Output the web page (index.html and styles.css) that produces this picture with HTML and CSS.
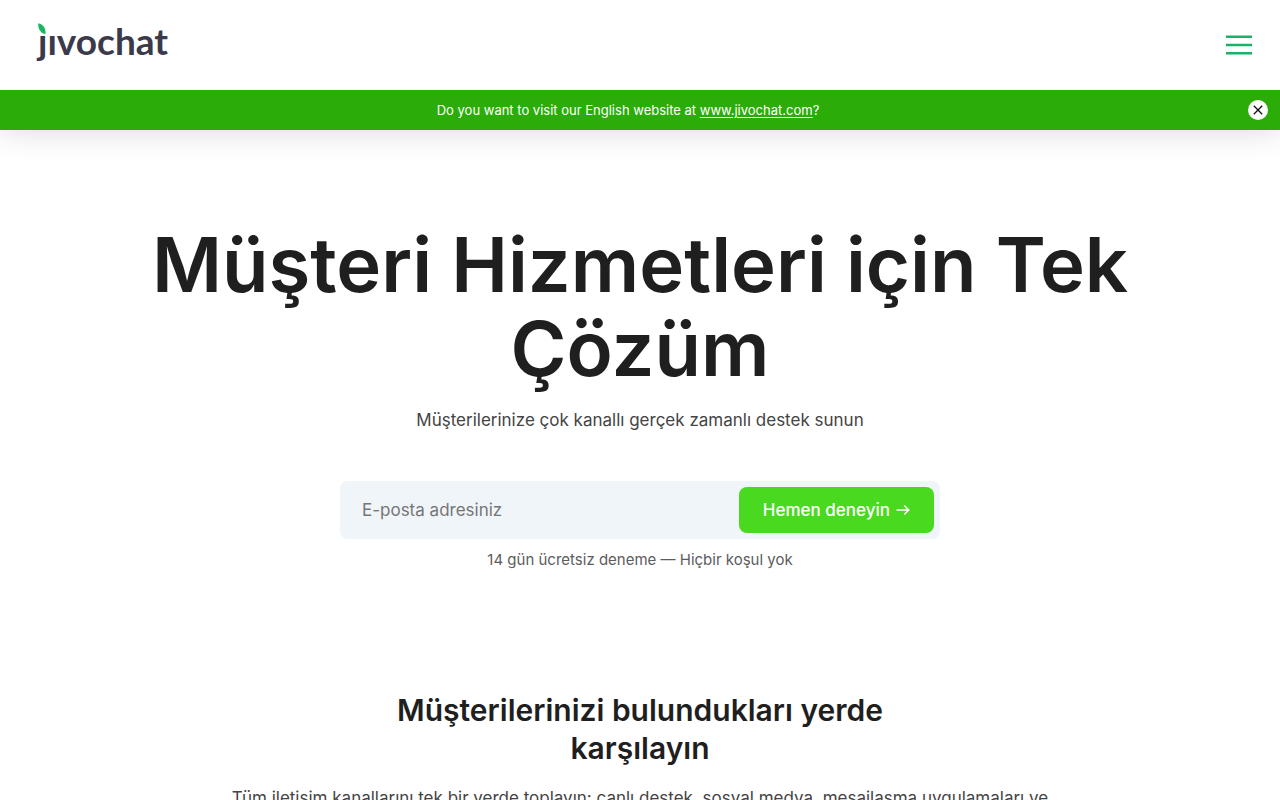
FILE: index.html
```html
<!DOCTYPE html>
<html lang="tr">
<head>
<meta charset="utf-8">
<meta name="viewport" content="width=device-width, initial-scale=1">
<title>jivochat</title>
<link rel="stylesheet" href="styles.css">
</head>
<body>
<header class="site-header">
  <div class="topbar">
    <a class="logo" href="#">
      <svg class="logo-leaf" viewBox="0 0 8 12" aria-hidden="true"><path d="M.3.2C4.800 1.200 8 4.500 7.500 11 3 10.500-.2 6 .3.200Z"/></svg>
      <span class="logo-word">ȷıvochat</span>
    </a>
    <button class="menu-button" type="button" aria-label="Menü">
      <svg viewBox="0 0 26 20" aria-hidden="true"><path d="M0 1.700h26M0 10h26M0 18.300h26"/></svg>
    </button>
  </div>
  <div class="language-bar">
    <p class="language-text">Do you want to visit our English website at <a href="#">www.jivochat.com</a>?</p>
    <button class="close-button" type="button" aria-label="Kapat">
      <svg viewBox="0 0 20 20" aria-hidden="true"><path d="M5.800 5.800l8.400 8.400M14.200 5.800l-8.400 8.400"/></svg>
    </button>
  </div>
</header>
<main>
  <section class="hero">
    <h1>Müşteri Hizmetleri için Tek Çözüm</h1>
    <p class="hero-lead">Müşterilerinize çok kanallı gerçek zamanlı destek sunun</p>
    <form class="signup">
      <input class="signup-email" type="email" placeholder="E-posta adresiniz" aria-label="E-posta adresiniz">
      <button class="signup-button" type="button">Hemen deneyin
        <svg viewBox="0 0 14 12" aria-hidden="true"><path d="M.5 6h12M8.200 1.500 12.700 6l-4.500 4.500"/></svg>
      </button>
    </form>
    <p class="hero-note">14 gün ücretsiz deneme — Hiçbir koşul yok</p>
  </section>
  <section class="channels">
    <h2>Müşterilerinizi bulundukları yerde karşılayın</h2>
    <p>Tüm iletişim kanallarını tek bir yerde toplayın: canlı destek, sosyal medya, mesajlaşma uygulamaları ve</p>
  </section>
</main>
</body>
</html>
```
FILE: styles.css
```css
* { box-sizing: border-box; }

body {
  margin: 0;
  background: #fff;
  color: #1f1f1f;
  font-family: Inter, "Liberation Sans", sans-serif;
}

h1, h2, p { margin: 0; }

button {
  border: 0;
  padding: 0;
  font-family: inherit;
  cursor: pointer;
}

svg { display: block; }

.site-header { box-shadow: 0 0 30px rgba(0, 0, 0, 0.16); }

.topbar {
  display: flex;
  align-items: center;
  justify-content: space-between;
  height: 90px;
  padding: 0 28px 0 38px;
  background: #fff;
}

.logo {
  position: relative;
  padding-bottom: 8px;
  color: #3b3a4a;
  text-decoration: none;
}

.logo-word {
  display: block;
  font: 700 37px/44px Lato, sans-serif;
}

.logo-leaf {
  position: absolute;
  top: 4px;
  left: 0;
  width: 8px;
  height: 12px;
  fill: #18b85c;
}

.menu-button {
  width: 26px;
  background: none;
}

.menu-button path {
  fill: none;
  stroke: #18b368;
  stroke-width: 2.400;
}

.language-bar {
  display: flex;
  align-items: center;
  height: 40px;
  padding: 0 12px 0 8px;
  background: #2bac08;
  color: #fff;
}

.language-text {
  flex: 1;
  text-align: center;
  font-size: 13px;
  line-height: 20px;
}

.language-text a {
  color: inherit;
  text-underline-offset: 2px;
}

.close-button {
  width: 20px;
  height: 20px;
  border-radius: 50%;
  background: #fff;
}

.close-button path {
  fill: none;
  stroke: #111;
  stroke-width: 1.300;
}

.hero {
  display: flex;
  flex-direction: column;
  align-items: center;
  max-width: 1040px;
  margin: 0 auto;
  padding: 92px 20px 0;
  text-align: center;
}

h1 {
  font-size: 76px;
  font-weight: 600;
  line-height: 84px;
}

.hero-lead {
  margin-top: 16px;
  color: #444;
  font-size: 17px;
  line-height: 28px;
}

.signup {
  display: flex;
  width: 100%;
  max-width: 600px;
  margin-top: 47px;
  padding: 6px;
  border-radius: 8px;
  background: #f0f5fa;
}

.signup-email {
  flex: 1;
  min-width: 0;
  padding: 0 16px;
  border: 0;
  background: none;
  color: #1f1f1f;
  font: 400 17px/24px Inter, sans-serif;
}

.signup-email::placeholder { color: #757575; }

.signup-button {
  display: flex;
  align-items: center;
  gap: 6px;
  height: 46px;
  padding: 0 24px;
  border-radius: 8px;
  background: #49d91f;
  color: #fff;
  font-size: 17px;
  font-weight: 500;
}

.signup-button svg { width: 14px; }

.signup-button path {
  fill: none;
  stroke: #fff;
  stroke-width: 1.600;
}

.hero-note {
  margin-top: 9px;
  color: #5c5c5c;
  font-size: 15px;
  line-height: 24px;
}

.channels {
  max-width: 900px;
  margin: 0 auto;
  padding: 119px 20px 0;
  text-align: center;
}

h2 {
  max-width: 560px;
  margin: 0 auto;
  font-size: 30px;
  font-weight: 600;
  line-height: 38px;
}

.channels p {
  margin-top: 17px;
  color: #444;
  font-size: 17px;
  line-height: 28px;
}
```
